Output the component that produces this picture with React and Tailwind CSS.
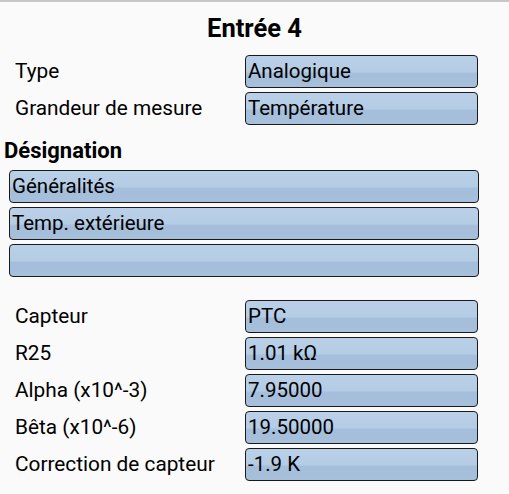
const fieldBg =
  "bg-[linear-gradient(to_bottom,#b9d0e8_0%,#b5cce5_50%,#a4bedb_57%,#a6bfdb_100%)]";

function Field({ value, className = "" }) {
  return (
    <div
      className={`h-[33px] border border-[#1a1a1a] rounded-[4px] ${fieldBg} flex items-center pl-[2px] text-[20.5px] text-black leading-none ${className}`}
    >
      {value}
    </div>
  );
}

function Row({ label, value }) {
  return (
    <div className="flex items-center">
      <div className="w-[245px] pl-[15px] text-[20.8px] leading-none text-black">{label}</div>
      <Field value={value} className="w-[233px]" />
    </div>
  );
}

export default function App() {
  const sensor = [
    ["Capteur", "PTC"],
    ["R25", "1.01 kΩ"],
    ["Alpha (x10^-3)", "7.95000"],
    ["Bêta (x10^-6)", "19.50000"],
    ["Correction de capteur", "-1.9 K"],
  ];

  return (
    <div
      className="w-[509px] h-[494px] bg-[#fafafa] border-t-2 border-[#c6c6c6] overflow-hidden"
      style={{ fontFamily: "Roboto, 'Liberation Sans', sans-serif" }}
    >
      <div className="h-[53px] flex items-center justify-center text-[25.5px] leading-none font-bold text-black">
        Entrée 4
      </div>

      <div className="flex flex-col gap-[4px]">
        <Row label="Type" value="Analogique" />
        <Row label="Grandeur de mesure" value="Température" />
      </div>

      <div className="mt-[16px] mb-[9px] pl-[4px] leading-[20px] text-[22px] font-bold text-black">
        Désignation
      </div>

      <div className="flex flex-col gap-[4px] pl-[9px]">
        <Field value="Généralités" className="w-[470px]" />
        <Field value="Temp. extérieure" className="w-[470px]" />
        <Field value="" className="w-[470px]" />
      </div>

      <div className="mt-[23px] flex flex-col gap-[4px]">
        {sensor.map(([l, v]) => (
          <Row key={l} label={l} value={v} />
        ))}
      </div>
    </div>
  );
}
